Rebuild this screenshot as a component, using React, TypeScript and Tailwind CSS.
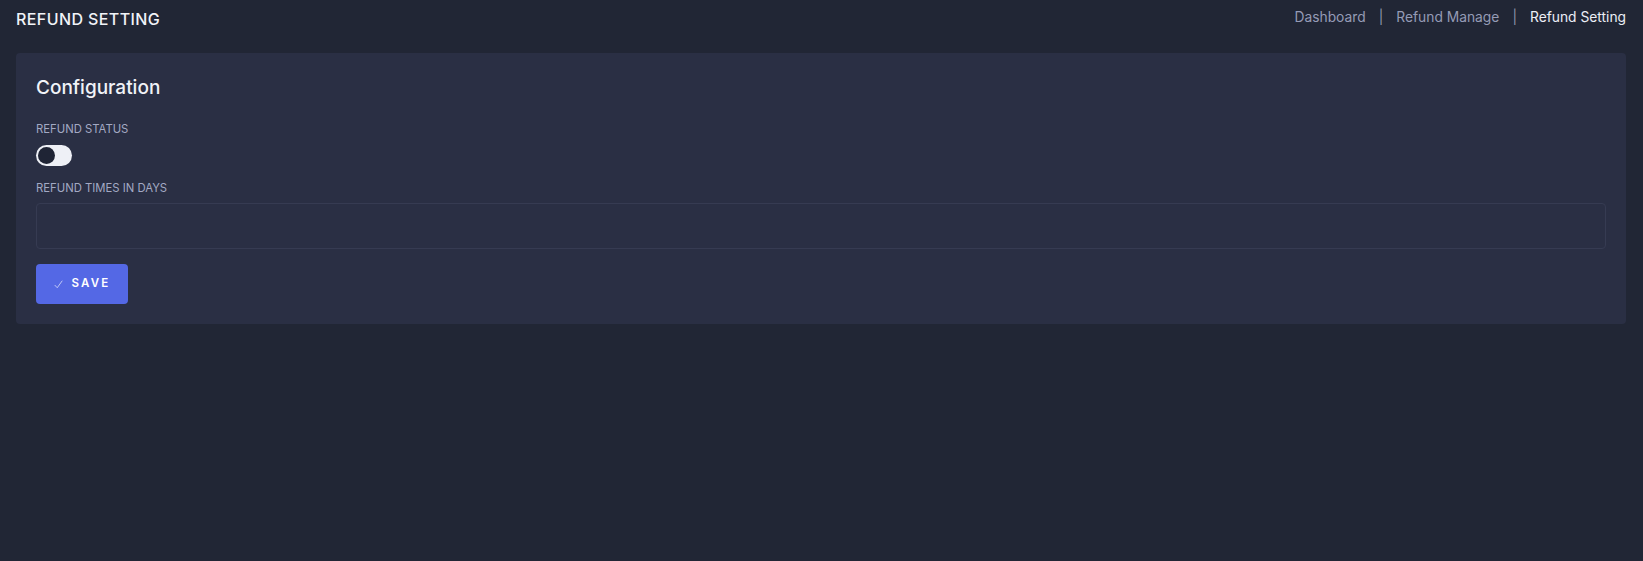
import { useState } from "react";

const crumbs = ["Dashboard", "Refund Manage", "Refund Setting"];

export default function App() {
  const [enabled, setEnabled] = useState(false);
  const [days, setDays] = useState("");

  return (
    <div
      className="min-h-[561px] w-full bg-[#212635] px-4"
      style={{ fontFamily: "Inter, 'Open Sans', sans-serif" }}
    >
      <div className="flex h-[53px] items-start justify-between pt-[7px]">
        <h1 className="text-[16px] font-medium tracking-[0.4px] text-[#f1f3f8]">REFUND SETTING</h1>
        <nav className="flex items-center pt-[0px] pr-[1px] text-[13.8px]">
          {crumbs.map((c, i) => (
            <div key={c} className="flex items-center">
              {i > 0 && <span className="px-[13px] text-[#8f95ad]">|</span>}
              <span className={i === crumbs.length - 1 ? "text-[#eceef5]" : "text-[#959bb6]"}>{c}</span>
            </div>
          ))}
        </nav>
      </div>

      <div className="mr-[1px] rounded-[4px] bg-[#2a2f44] px-5 pt-[23px] pb-[20px]">
        <h2 className="text-[19px] font-medium leading-[23px] text-[#f1f3f8]">Configuration</h2>

        <label className="mt-[23px] block text-[11.3px] leading-[14px] text-[#a3a9c3]">REFUND STATUS</label>
        <button
          onClick={() => setEnabled(!enabled)}
          className={`mt-[9px] flex h-[21px] w-[36px] items-center rounded-full px-[1.5px] ${
            enabled ? "justify-end bg-[#5468e5]" : "justify-start bg-[#eef0f6]"
          }`}
        >
          <span className="h-[17px] w-[17px] rounded-full bg-[#1f2435]" />
        </button>

        <label className="mt-[15px] block text-[11.3px] leading-[14px] text-[#a3a9c3]">REFUND TIMES IN DAYS</label>
        <input
          value={days}
          onChange={(e) => setDays(e.target.value)}
          className="mt-[8px] block h-[46px] w-full rounded-[4px] border border-[#363b52] bg-[#2a2f44] px-3 text-[13px] text-[#e5e7ef] outline-none"
        />

        <button className="mt-[15px] flex h-[40px] w-[92px] items-center justify-center gap-[9px] rounded-[4px] bg-[#5468e5] text-[11.5px] font-semibold tracking-[2.2px] text-white">
          <svg width="9" height="9" viewBox="0 0 10 10" fill="none" stroke="#c9d0f7" strokeWidth="1">
            <path d="M0.8 5.6 L3.6 8.6 L9.2 0.8" />
          </svg>
          SAVE
        </button>
      </div>
    </div>
  );
}
